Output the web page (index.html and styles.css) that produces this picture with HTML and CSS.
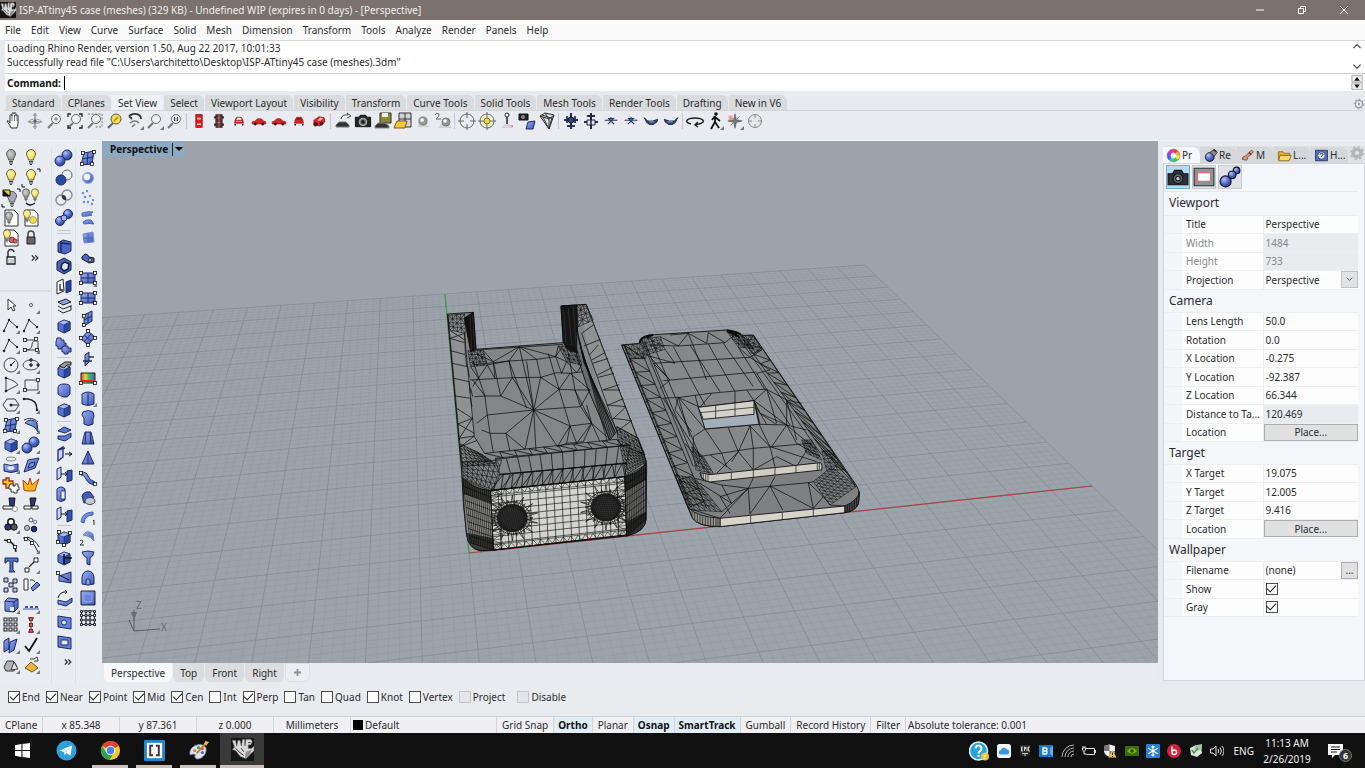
FILE: index.html
```html
<!DOCTYPE html>
<html lang="en">
<head>
<meta charset="utf-8">
<title>ISP-ATtiny45 case (meshes) - Perspective</title>
<link rel="stylesheet" href="styles.css">
</head>
<body>
<svg class="defs" width="0" height="0" aria-hidden="true">
  <defs>
    <radialGradient id="gb" cx=".35" cy=".3" r=".8"><stop offset="0" stop-color="#b4c4f6"/><stop offset=".5" stop-color="#5370cc"/><stop offset="1" stop-color="#1d2f7c"/></radialGradient>
    <linearGradient id="gs" x1="0" y1="0" x2="1" y2="1"><stop offset="0" stop-color="#9db1f2"/><stop offset="1" stop-color="#3c56b8"/></linearGradient>
    <radialGradient id="gy" cx=".4" cy=".4" r=".7"><stop offset="0" stop-color="#fffbb0"/><stop offset="1" stop-color="#f0d23c"/></radialGradient>
    <radialGradient id="gg" cx=".4" cy=".4" r=".7"><stop offset="0" stop-color="#cfd2d6"/><stop offset="1" stop-color="#85898f"/></radialGradient>
    <linearGradient id="rb" x1="0" x2="1"><stop offset="0" stop-color="#e33"/><stop offset=".3" stop-color="#dd4"/><stop offset=".6" stop-color="#3b5"/><stop offset="1" stop-color="#46c"/></linearGradient>
  </defs>
</svg>

<div class="window">
  <header class="titlebar">
    <span class="app-icon" data-icon="rhino"></span>
    <h1 class="title">ISP-ATtiny45 case (meshes) (329 KB) - Undefined WIP (expires in 0 days) - [Perspective]</h1>
    <div class="window-buttons">
      <button aria-label="Minimize"><svg viewBox="0 0 10 10"><path d="M1 5h8"/></svg></button>
      <button aria-label="Restore"><svg viewBox="0 0 10 10"><path d="M1.500 3.500h5v5h-5zM3.500 3.500v-2h5v5h-2"/></svg></button>
      <button aria-label="Close"><svg viewBox="0 0 10 10"><path d="M1 1l8 8M9 1l-8 8"/></svg></button>
    </div>
  </header>

  <nav class="menubar" aria-label="Main menu">
    <button>File</button><button>Edit</button><button>View</button><button>Curve</button><button>Surface</button><button>Solid</button><button>Mesh</button><button>Dimension</button><button>Transform</button><button>Tools</button><button>Analyze</button><button>Render</button><button>Panels</button><button>Help</button>
  </nav>

  <section class="console">
    <div class="history">
      <div class="history-text">
        <p>Loading Rhino Render, version 1.50, Aug 22 2017, 10:01:33</p>
        <p>Successfully read file "C:\Users\architetto\Desktop\ISP-ATtiny45 case (meshes).3dm"</p>
      </div>
      <div class="scroller">
        <svg viewBox="0 0 10 8"><path d="M2 5l3-3 3 3" fill="none" stroke="#444"/></svg>
        <svg viewBox="0 0 10 8"><path d="M2 2l3 3 3-3" fill="none" stroke="#444"/></svg>
      </div>
    </div>
    <div class="command">
      <label for="cmd">Command:</label><input id="cmd" type="text">
      <svg class="spin" viewBox="0 0 12 16"><path d="M.5.500h11v7H.500zM.5 8.500h11v7H.500z" fill="#eee" stroke="#aaa"/><path d="M3 6l3-4 3 4zM3 10l3 4 3-4z" fill="#111"/></svg>
    </div>
  </section>

  <nav class="tabs" aria-label="Toolbar groups">
    <button>Standard</button><button>CPlanes</button><button class="on">Set View</button><button>Select</button><button>Viewport Layout</button><button>Visibility</button><button>Transform</button><button>Curve Tools</button><button>Solid Tools</button><button>Mesh Tools</button><button>Render Tools</button><button>Drafting</button><button>New in V6</button>
    <span class="gear" data-icon="gear"></span>
  </nav>
  <div class="toolbar" data-icons="hand orbit mag magext magwin magsel undoview* magdot* mag11 | cartop carbot carfront carside carside2 carback carpersp | carrot camera savecar openview ball twoball | target targety zaxis camobj frustum | planetop planebot planefront planefront planeside planeside2 | turn walk* compass* target2"></div>

  <main class="work">
    <aside class="palettes">
      <div class="stack">
        <div class="palette two" data-icons="bulboff bulb bulb bulbcorner bulbhalf bulbswap docbulboff docbulb docred lock unlock more"></div>
        <div class="palette two lower" data-icons="cursor point* polyline* polyline* polyline* ctrlcurve* circle* ellipse* arc* rect* hexagon* fillet* srfpts* srfcurve* box* spheres* cylproj* sheet* puzzle explode trim split group* ungroup blend offset* text scale* copies rotate boxfill* array* grid* redarr* slabs* check* solids* pyramid*"></div>
      </div>
      <div class="palette one" data-icons="spheres spherediff sphereint spheresplit | slab nut shell layers box puzzleb | boxtop boxround box | twist extr extr2 cylcut extr2 | boxpts boxarrow wedge rotface | holep holeq more"></div>
      <div class="palette one last" data-icons="srfpts ballw dots flow patch rail rect4* rect4 srfup srfdia cut rainbow cyl* cyl2 trapez cone pipe blob one twoc funnel arch frame netgrid"></div>
    </aside>

    <section class="view">
      <div class="canvas">
        <svg id="scene" viewBox="102 141 1056 522" preserveAspectRatio="xMidYMid slice" role="img" aria-label="Perspective view"></svg>
        <div class="view-title"><span>Perspective</span><button aria-label="View menu"><svg viewBox="0 0 8 6"><path d="M0 1h8l-4 4z"/></svg></button></div>
      </div>
      <nav class="view-tabs" aria-label="Views"><button class="on">Perspective</button><button>Top</button><button>Front</button><button>Right</button><button class="add" aria-label="Add view"><svg viewBox="0 0 10 10"><path d="M5 1v8M1 5h8" stroke="#8d9196" stroke-width="2"/></svg></button></nav>
    </section>

    <aside class="props">
      <nav class="prop-tabs">
        <button class="on"><span data-icon="wheel"></span>Pr</button><button><span data-icon="rendball"></span>Re</button><button><span data-icon="brush"></span>M</button><button><span data-icon="folder"></span>L...</button><button><span data-icon="help"></span>H...</button>
        <span class="gear" data-icon="gear2"></span>
      </nav>
      <div class="prop-body">
        <div class="modes"><button class="on" aria-label="Viewport" data-icon="bigcam"></button><button aria-label="Frame" data-icon="bigframe"></button><button aria-label="Objects" data-icon="bigballs"></button></div>
        <table class="grid">
          <colgroup><col class="col-indent"><col class="col-name"><col></colgroup>
          <tbody>
            <tr><th colspan="3">Viewport</th></tr>
            <tr><td></td><td><label for="p1">Title</label></td><td><input id="p1" value="Perspective"></td></tr>
            <tr class="off"><td></td><td><label for="p2">Width</label></td><td><input id="p2" value="1484" disabled></td></tr>
            <tr class="off"><td></td><td><label for="p3">Height</label></td><td><input id="p3" value="733" disabled></td></tr>
            <tr><td></td><td><label for="p4">Projection</label></td><td><div class="pick"><select id="p4"><option>Perspective</option></select><svg viewBox="0 0 10 8"><path d="M2 2l3 3 3-3" fill="none" stroke="#555"/></svg></div></td></tr>
          </tbody>
          <tbody>
            <tr><th colspan="3">Camera</th></tr>
            <tr><td></td><td><label for="c1">Lens Length</label></td><td><input id="c1" value="50.0"></td></tr>
            <tr><td></td><td><label for="c2">Rotation</label></td><td><input id="c2" value="0.0"></td></tr>
            <tr><td></td><td><label for="c3">X Location</label></td><td><input id="c3" value="-0.275"></td></tr>
            <tr><td></td><td><label for="c4">Y Location</label></td><td><input id="c4" value="-92.387"></td></tr>
            <tr><td></td><td><label for="c5">Z Location</label></td><td><input id="c5" value="66.344"></td></tr>
            <tr class="ro"><td></td><td><label for="c6">Distance to Ta...</label></td><td><input id="c6" value="120.469" readonly></td></tr>
            <tr><td></td><td><label for="c7">Location</label></td><td><button id="c7" class="place">Place...</button></td></tr>
          </tbody>
          <tbody>
            <tr><th colspan="3">Target</th></tr>
            <tr><td></td><td><label for="t1">X Target</label></td><td><input id="t1" value="19.075"></td></tr>
            <tr><td></td><td><label for="t2">Y Target</label></td><td><input id="t2" value="12.005"></td></tr>
            <tr><td></td><td><label for="t3">Z Target</label></td><td><input id="t3" value="9.416"></td></tr>
            <tr><td></td><td><label for="t4">Location</label></td><td><button id="t4" class="place">Place...</button></td></tr>
          </tbody>
          <tbody>
            <tr><th colspan="3">Wallpaper</th></tr>
            <tr><td></td><td><label for="w1">Filename</label></td><td><div class="pick"><input id="w1" value="(none)"><button>...</button></div></td></tr>
            <tr><td></td><td><label for="w2">Show</label></td><td><input id="w2" type="checkbox" checked></td></tr>
            <tr><td></td><td><label for="w3">Gray</label></td><td><input id="w3" type="checkbox" checked></td></tr>
          </tbody>
        </table>
      </div>
    </aside>
  </main>

  <form class="osnap">
    <label><input type="checkbox" checked>End</label><label><input type="checkbox" checked>Near</label><label><input type="checkbox" checked>Point</label><label><input type="checkbox" checked>Mid</label><label><input type="checkbox" checked>Cen</label><label><input type="checkbox">Int</label><label><input type="checkbox" checked>Perp</label><label><input type="checkbox">Tan</label><label><input type="checkbox">Quad</label><label><input type="checkbox">Knot</label><label><input type="checkbox">Vertex</label><label class="dim"><input type="checkbox">Project</label><label class="dim"><input type="checkbox">Disable</label>
  </form>

  <footer class="status">
    <span class="s-plane">CPlane</span><span class="s-num">x 85.348</span><span class="s-num">y 87.361</span><span class="s-num">z 0.000</span><span class="s-num">Millimeters</span><span class="s-layer"><i></i>Default</span><button>Grid Snap</button><button class="on">Ortho</button><button>Planar</button><button class="on">Osnap</button><button class="on">SmartTrack</button><button>Gumball</button><button>Record History</button><button>Filter</button><span class="s-tol">Absolute tolerance: 0.001</span>
  </footer>
</div>

<div class="taskbar">
  <button aria-label="Start"><svg viewBox="0 0 14 14"><path d="M0 2l6-1v5.500H0zM7 .9L14 0v6.500H7zM0 7.500h6V13l-6-1zM7 7.500h7V14l-7-1z" fill="#fff"/></svg></button>
  <button aria-label="Telegram"><svg viewBox="0 0 22 22"><circle cx="11" cy="11" r="10.500" fill="#2d9fdb"/><path d="M4 11L17 5.500 15 16.500l-4-3-2 2.500-.5-3.500z" fill="#fff"/><path d="M8.500 12.500L15 7.500 10 13z" fill="#a9cfe8"/></svg></button>
  <button class="run" aria-label="Chrome"><svg viewBox="0 0 22 22"><circle cx="11" cy="11" r="10" fill="#f7ca28"/><path d="M11 11L2.300 6A10 10 0 0 1 19.700 6z" fill="#dc4436"/><path d="M11 1a10 10 0 0 1 8.700 5H11z" fill="#dc4436"/><path d="M2.300 6A10 10 0 0 0 10 21l4.500-8L6.500 13z" fill="#34a050"/><circle cx="11" cy="11" r="5" fill="#f4f4f4"/><circle cx="11" cy="11" r="3.900" fill="#4a83ec"/></svg></button>
  <button class="run" aria-label="Brackets"><svg viewBox="0 0 22 22"><rect width="22" height="22" rx="1" fill="#2386cd"/><rect x="3" y="3" width="16" height="16" fill="#fff"/><path d="M9.500 6H6.500v10h3M12.500 6h3v10h-3" fill="none" stroke="#333" stroke-width="2"/></svg></button>
  <button class="run" aria-label="Paint"><svg viewBox="0 0 22 22"><path d="M2 14C2 8 8 4 14 5c5 1 6 5 4 9-2 5-8 7-10 5s1-3-1-4-5 2-5-1z" fill="#dde6f0" stroke="#8899ac"/><circle cx="7" cy="11" r="1.600" fill="#e07a2a"/><circle cx="11" cy="8" r="1.600" fill="#3a9f4a"/><circle cx="15" cy="9" r="1.600" fill="#d33"/><circle cx="15" cy="13" r="1.600" fill="#36c"/><path d="M9 14L19 3" stroke="#c77a2c" stroke-width="2"/><path d="M18 1l4 1-3 4-2-2z" fill="#ecc24c"/></svg></button>
  <button class="run active" aria-label="Rhino WIP" data-icon="rhinobig"></button>
  <div class="tray">
    <svg class="wide" viewBox="0 0 20 20"><circle cx="9.500" cy="10" r="9" fill="#2aa3dc" stroke="#eaf6fc" stroke-width="1.500"/><path d="M6.500 7.500a3 3 0 1 1 4.500 2.600c-1 .6-1.500 1-1.500 2.400M9.500 14v1.800" fill="none" stroke="#fff" stroke-width="2"/><circle cx="16" cy="15.500" r="4" fill="#eec33a"/><path d="M16 13.500v2.500M16 17v1" stroke="#fff"/></svg>
    <svg viewBox="0 0 14 14"><rect width="14" height="14" rx="2.500" fill="#eef5fb"/><path d="M3.500 10.500a2.300 2.300 0 0 1 .3-4.500 3.200 3.200 0 0 1 6-.4 2.500 2.500 0 0 1 .7 4.900z" fill="#3b95e6"/></svg>
    <svg viewBox="0 0 14 14"><path d="M2 1h10v10l-5 2-5-2z" fill="#2c2c2c"/><path d="M3.500 3v4M3.500 3h1.500M3.500 5h1.500M3.500 7h1.500M6.500 7V3h1v2h-1M9 3v4M12 3h-1.500v4H12M4 9.500h6M6 11h2" stroke="#ddd" stroke-width=".9" fill="none"/></svg>
    <svg viewBox="0 0 14 14"><path d="M0 1h14v12H0z" fill="#1878c4"/><path d="M11 4l3-2v10l-3-2z" fill="#5ab0ea"/><path d="M4 4v6h3a1.600 1.600 0 0 0 0-3 1.600 1.600 0 0 0 0-3zM4 7h3" fill="none" stroke="#fff" stroke-width="1.400"/></svg>
    <svg viewBox="0 0 14 14" fill="none" stroke="#b9b9b9"><path d="M1 13A12 12 0 0 1 13 1M4 13a9 9 0 0 1 9-9M7 13a6 6 0 0 1 6-6M10 13a3 3 0 0 1 3-3"/></svg>
    <svg viewBox="0 0 14 14" fill="none" stroke="#e4e4e4"><path d="M3.500 4.500h9v6h-8M13.500 6v3M1 2v2M3 2v2M.5 4h3v2l-1.500 1.500L.5 6zM2 7v3h2.500"/></svg>
    <svg viewBox="0 0 14 14"><path d="M6.500.5L12 2v5c0 3-3 5-5.500 6C4 12 1 10 1 7V2z" fill="#f3f3f3"/><path d="M6.500.500V7H1V2zM6.500 7H12c0 3-3 5-5.500 6z" fill="#777"/><path d="M9.500 6l4 7.500H5.500z" fill="#f5c32c"/><path d="M9.500 8.500v2.500M9.500 12v1" stroke="#222"/></svg>
    <svg viewBox="0 0 14 14"><rect y="2" width="14" height="10" fill="#3b6b14"/><path d="M2 7q5-6 10 0-5 5-10 0z" fill="#76b900"/><circle cx="7" cy="7" r="1.800" fill="#2c4a12"/></svg>
    <svg viewBox="0 0 14 14"><rect width="14" height="14" rx="1" fill="#2b7fd4"/><path d="M7 1.500v11M2.200 4.200l9.600 5.600M11.800 4.200L2.200 9.800M5.500 2.500L7 4l1.500-1.500M5.500 11.500L7 10l1.500 1.500" stroke="#fff" fill="none" stroke-width="1.100"/></svg>
    <svg viewBox="0 0 14 14"><circle cx="7" cy="7" r="7" fill="#d81e3c"/><path d="M5 2.500v6" stroke="#fff" stroke-width="1.500"/><circle cx="7.300" cy="8.300" r="2.300" fill="none" stroke="#fff" stroke-width="1.500"/></svg>
    <svg viewBox="0 0 14 14"><path d="M1 4l6-3 5 2 1 6-5 4-6-2z" fill="#dde4de"/><path d="M8 1l5-1v5l-5 2-3-3z" fill="#a9bfac"/><path d="M3 6l2 3 4-5" stroke="#38a04a" stroke-width="1.500" fill="none"/></svg>
    <svg viewBox="0 0 14 14" fill="none" stroke="#e4e4e4"><path d="M.5 5h2.500l3-3v10L3 9H.500zM8 5q1.500 2 0 4M10 3.500q3 3.500 0 7M12 2q4 5 0 10"/></svg>
    <span class="lang">ENG</span>
    <div class="clock"><span>11:13 AM</span><span>2/26/2019</span></div>
    <button class="notes" aria-label="Notifications"><svg viewBox="0 0 16 16"><path d="M0 1h15v11H7l-3 3v-3H0z" fill="#fff"/><path d="M3 4h9M3 6.500h9M3 9h6" stroke="#111"/></svg><b>6</b></button>
  </div>
</div>
<script src="app.js"></script>
</body>
</html>
```

FILE: styles.css
```css
* { box-sizing: border-box; }
body {
  margin: 0;
  min-height: 100vh;
  display: flex;
  flex-direction: column;
  background: #e7eaee;
  color: #2b2b2e;
  font: 10px/14px "Noto Sans", "Open Sans", sans-serif;
}
button, input, select { font: inherit; color: inherit; }
button { background: none; border: 0; padding: 0; margin: 0; white-space: nowrap; }
p, h1 { margin: 0; font: inherit; }
.defs { position: absolute; }
svg { display: block; }

.window { flex: 1; display: flex; flex-direction: column; min-height: 0; }

.titlebar { height: 20px; display: flex; align-items: center; gap: 3px; background: #7b7270; color: #f1eeed; }
.app-icon { width: 16px; height: 16px; }
.titlebar .title { flex: 1; }
.window-buttons { display: flex; }
.window-buttons button { width: 42px; height: 20px; display: flex; align-items: center; justify-content: center; }
.window-buttons svg { width: 10px; height: 10px; fill: none; stroke: #fff; }

.menubar { height: 20px; display: flex; align-items: center; gap: 10px; padding: 0 5px; background: #fbfbfc; }

.console { margin-left: 5px; background: #fff; }
.history { display: flex; justify-content: space-between; border-top: 1px solid #d5d8dc; height: 33px; padding: 0 2px; }
.scroller { display: flex; flex-direction: column; justify-content: space-between; }
.scroller svg { width: 12px; height: 12px; }
.command { display: flex; align-items: center; height: 18px; padding: 0 2px; border-top: 1px solid #c9ccd0; }
.command label { font-weight: 700; color: #111; }
.command input { flex: 1; height: 14px; margin-left: 3px; padding: 0; border: 0; border-left: 1px solid #000; background: none; outline: 0; }
.spin { width: 12px; height: 15px; }

.tabs { height: 20px; margin-left: 5px; padding-left: 1px; display: flex; align-items: flex-end; gap: 1px; border-bottom: 1px solid #d3d5d8; background: #e7eaee; }
.tabs button { height: 15px; padding: 0 6px; background: #dadbdc; border-radius: 2px 6px 0 0; }
.tabs .on { background: #eff1f4; }
.gear { width: 12px; height: 12px; margin-left: auto; }
.toolbar { height: 30px; display: flex; align-items: flex-start; padding: 0 5px; background: #e9ebf0; border-bottom: 1px solid #f4f5f7; }
.toolbar button, .palette button { width: 20px; height: 20px; }
.toolbar .sep { width: 1px; height: 16px; margin: 2px 2px 2px 1px; background: #c5c8ce; }
.icon { width: 100%; height: 100%; }

.work { flex: 1; display: flex; min-height: 0; }
.palettes { display: flex; width: 102px; padding-top: 7px; background: #e9ecf0; }
.stack { width: 51px; }
.two { display: grid; grid-template-columns: 20px 20px; padding-left: 1px; }
.lower { margin-top: 22px; padding-top: 3px; border-top: 2px solid #dadde2; }
.one { display: flex; flex-direction: column; align-items: center; width: 24px; border-left: 1px solid #dcdfe4; }
.one .sep { width: 14px; height: 1px; margin: 1px 0 2px; background: #c3c6cc; }
.one .sep:nth-child(5) { height: 4px; margin: 2px 0; border: solid #c3c6cc; border-width: 1px 0; background: none; }

.view { flex: 1; min-width: 0; display: flex; flex-direction: column; }
.canvas { flex: 1; min-height: 0; position: relative; overflow: hidden; background: #9ca3ab; }
#scene { position: absolute; width: 100%; height: 100%; }
.view-title { position: absolute; left: 1px; top: 0; height: 16px; display: flex; align-items: center; padding-left: 7px; background: #8ca9c2; color: #111; font-weight: 700; }
.view-title button { width: 12px; height: 13px; margin-left: 4px; border-left: 1px solid #222; padding-left: 2px; }
.view-title svg { width: 8px; height: 6px; }
.view-tabs { height: 21px; display: flex; align-items: flex-start; padding-left: 2px; background: #e9ebf0; }
.view-tabs button { height: 19px; padding: 0 7px; background: #dcdddf; border-radius: 0 0 6px 6px; margin-right: 1px; }
.view-tabs .on { background: #f7f8fa; }
.view-tabs .add { background: #eceef1; border: 1px solid #dcdfe3; }
.view-tabs svg { width: 9px; height: 9px; }

.props { width: 207px; padding: 5px 0 3px 5px; display: flex; flex-direction: column; background: #e7eaee; }
.prop-tabs { display: flex; align-items: flex-end; height: 17px; background: #dfe1e4; }
.prop-tabs button { display: flex; align-items: center; gap: 1px; height: 16px; width: 37px; padding-left: 3px; background: #d5d7da; border-radius: 0 8px 0 0; }
.prop-tabs .on { background: #f6f7fa; }
.prop-tabs button span { width: 15px; height: 15px; }
.prop-tabs .gear { width: 14px; height: 14px; margin: 0 1px auto auto; }
.prop-body { flex: 1; background: #f5f6fa; border: 1px solid #d2d5da; padding-right: 6px; }
.modes { display: flex; gap: 2px; padding: 1px 2px 2px; height: 28px; border-bottom: 1px solid #e6e8ec; }
.modes button { width: 24px; height: 24px; background: #dfe1e6; border: 1px solid #c8cad0; }
.modes .on { background: #b6dbf2; border-color: #6fb0d8; }
.grid { width: 100%; border-collapse: collapse; table-layout: fixed; }
.col-indent { width: 18px; }
.col-name { width: 81px; }
.grid td, .grid th { padding: 0; height: 18px; border-bottom: 1px solid #eceef2; line-height: 14px; }
.grid tr:nth-child(odd) td { height: 19px; }
.grid th { height: 23px; text-align: left; font-weight: 400; font-size: 12px; padding-left: 5px; }
.grid td { background: #fdfdfe; }
.grid td:nth-child(1) { background: #f4f5f9; }
.grid td:nth-child(2) { padding-left: 4px; white-space: nowrap; border-right: 1px solid #eceef2; }
.grid input:not([type]) { display: block; width: 100%; height: 17px; padding: 0 0 0 2px; border: 0; background: none; }
.grid .off, .grid .off input { color: #85878b; }
.grid .off td:nth-child(3), .grid .ro td:nth-child(3) { background: #e9ebef; }
.place { display: block; width: 100%; height: 17px; border: 1px solid #adadb0; background: #e1e1e2; text-align: center; line-height: 14px; }
.pick { display: flex; height: 17px; }
.pick select { flex: 1; min-width: 0; appearance: none; border: 0; background: none; padding: 0 0 0 2px; }
.pick svg { flex: none; width: 17px; height: 17px; padding: 3px; border: 1px solid #bfc1c5; background: #e1e2e4; }
.pick button { width: 17px; flex: none; border: 1px solid #adadb0; background: #e1e1e2; line-height: 12px; }
input[type=checkbox] { appearance: none; width: 12px; height: 12px; margin: 0; border: 1px solid #4a4a4d; background: #fff; display: flex; align-items: center; justify-content: center; }
input[type=checkbox]:checked::after { content: ""; width: 8px; height: 4px; margin-bottom: 3px; border: solid #222; border-width: 0 0 1px 1px; transform: rotate(-47deg); }
.grid input[type=checkbox] { margin-left: 2px; }

.osnap { height: 32px; display: flex; align-items: center; gap: 6px; padding: 0 8px 6px; background: #e9ebef; }
.osnap label { display: flex; align-items: center; gap: 2px; }
.osnap .dim input { border-color: #c3c5c9; background: #e4e5e8; }
.osnap .dim + .dim { margin-left: 6px; }

.status { height: 17px; display: flex; background: #f0f0f3; border-top: 1px solid #cfd2d6; }
.status > * { border-right: 1px solid #d4d6da; padding: 0 5px; white-space: nowrap; line-height: 16px; }
.status .s-plane { width: 43px; }
.status .s-num { width: 77px; text-align: center; padding: 0; }
.status .s-layer { width: 146px; display: flex; align-items: center; gap: 2px; padding: 0 2px; }
.s-layer i { width: 10px; height: 10px; background: #000; }
.status .on { background: #e0eef8; color: #111; font-weight: 700; padding: 0 4px; }
.status .s-tol { border: 0; padding: 0 2px; }

.taskbar { height: 35px; display: flex; background: #101010; color: #f2f2f2; }
.taskbar > button { width: 44px; display: flex; align-items: center; justify-content: center; }
.taskbar > button svg { width: 21px; height: 21px; }
.taskbar > button:first-child svg { width: 15px; height: 15px; }
.taskbar .run { border: solid #101010; border-width: 3px 4px 0; box-shadow: inset 0 -3px 0 #c9c2bf; }
.taskbar .run svg { margin-bottom: 3px; }
.taskbar .active { border: 0; background: #3a3a3a; }
.taskbar .active svg { width: 23px; height: 23px; }
.tray { margin-left: auto; display: flex; align-items: center; gap: 7px; padding-right: 13px; }
.tray > svg { width: 14px; height: 14px; }
.tray > .wide { width: 20px; height: 20px; }
.tray > svg:nth-child(3n+1) { margin-right: 1px; }
.lang { margin-left: 3px; }
.clock { display: flex; flex-direction: column; align-items: center; width: 52px; line-height: 16px; }
.notes { position: relative; width: 24px; margin-left: 8px; }
.notes svg { width: 16px; height: 16px; }
.notes b { position: absolute; right: 0; top: 6px; width: 13px; height: 13px; border-radius: 50%; background: #333; border: 1px solid #777; color: #fff; font-size: 9px; line-height: 11px; text-align: center; }
```

FILE: app.js
```js
// ---- small drawing helpers -------------------------------------------------
const p = (d, f = 'none', s = '#222', w = 1) => `<path d="${d}" fill="${f}" stroke="${s}" stroke-width="${w}"/>`;
const c = (x, y, r, f = 'none', s = '#222', w = 1) => `<circle cx="${x}" cy="${y}" r="${r}" fill="${f}" stroke="${s}" stroke-width="${w}"/>`;
const B = 'url(#gb)', S = 'url(#gs)', Y = 'url(#gy)', G = 'url(#gg)', N = '#1d2b66', X = 'none';
const dots = (pts, f = '#fff') => pts.map(([x, y]) => `<rect x="${x - 1.5}" y="${y - 1.5}" width="3" height="3" fill="${f}" stroke="#111" stroke-width=".8"/>`).join('');
const small = (k, s) => `<g transform="translate(10 10) scale(${k}) translate(-10 -10)">${s}</g>`;
const bulb = (f, x = 10, y = 8, k = 1) => `<g transform="translate(${x} ${y}) scale(${k})">` + p('M-4.500-2a4.500 4.500 0 0 1 9 0c0 2.500-2 3-2 6h-5c0-3-2-3.500-2-6z', f, '#5b5a45') + p('M-2 5.500h4M-2 7h4M-1 8.500h2', X, '#444') + '</g>';
const cube = (x = 0, y = 0) => `<g transform="translate(${x} ${y})">` + p('M4 7l6-3 6 2v8l-6 3-6-3z', '#5572d0', N) + p('M4 7l6-3 6 2-6 3z', '#a9bbf5', N, .6) + p('M10 9v8l6-3V6z', '#2f489f', N, .6) + '</g>';
const car = (d) => p(d, '#d22', '#7c1414', .8);
const mag = (extra = '') => p('M8 12l-5 5', X, '#777', 2) + c(11, 8, 4.5, '#eef2f4', '#666') + extra;
const cross = (s) => c(10, 10, 7, X, s) + p('M10 1v6M10 13v6M1 10h6M13 10h6', X, s);
const doc = p('M4 2h9l4 4v12H4z', '#fff', '#333');
const rhino = p('M0 0h20v20H0z', '#151515', X) + p('M1 2l3 0 1 5 1-5h2l1 5 1-6h2v6l1-6h4q3 2 0 5l-2 0v3l3 0 2-2v4l-4 4-3 3-5-2-4-5-3-1 2-2z', '#d8d8d8', '#555', .5) + p('M13 12l5-2-2 5-4 3z', '#8f8f8f', X) + p('M4 9l4 4 3 2M9 9l2 3M15 4h2', X, '#222', .8);

const art = {
  rhino, rhinobig: rhino,
  gear: c(10, 10, 6, X, '#999', 2) + c(10, 10, 8, X, '#999', 1.5).replace('/>', ' stroke-dasharray="3 3"/>') + c(10, 10, 2, '#999', X),
  gear2: c(10, 10, 5.5, X, '#b3b5b9', 5) + c(10, 10, 9, X, '#b3b5b9', 2).replace('/>', ' stroke-dasharray="3.500 3.500"/>'),
  hand: p('M6 17c-1-3-3-5-4-7 1-1 2 0 3 2V5c0-2 2-2 2 0V3c0-2 2-2 2 0 0-2 2-2 2 0v2c1-2 2-1 2 0v7c0 3-1 3-1 5z', '#fff', '#333') + p('M7 5v5M9.500 4v6M12 5v5', X, '#555', .8),
  orbit: small(.9, p('M10 2v16M2 11h16', X, '#666') + p('M10 8a7 2.500 0 1 0 .1 0M10 1l-2 3h4zM10 19l-2-3h4z', X, '#999') + c(10, 10, 1.8, '#556', X)),
  mag: mag(p('M9 8h4M11 6v4', X, '#777')), magdot: mag(), mag11: mag(p('M9.500 6v4M12.500 6v4M11 7v.8M11 9v.8', X, '#333')),
  magext: mag() + p('M3 6V3h3M14 3h3v3M17 14v3h-3M6 17H3v-3', X, '#222', 1.3),
  magwin: mag() + p('M3 3h14v13H9', X, '#777').replace('/>', ' stroke-dasharray="2 1.500"/>'),
  magsel: p('M8 12l-5 5', X, '#666', 2.2) + c(11, 8, 5, '#f4dc4c', '#555') + p('M9 10l4-4', X, '#a98410', 1.5),
  undoview: p('M4 5c5-4 12-2 12 3M4 5l4-2M4 5l3 3', X, '#333', 1.800) + p('M5 12q5-4 9 0M7 16l3-3', X, '#777', 1.500),
  cartop: small(.8, p('M6 2h8v16H6z', '#e01818', '#8a1010') + p('M7.500 6h5v2h-5zM7.500 13h5v2h-5z', '#ffc9c9', X)),
  carbot: small(.8, p('M6 2h8v16H6z', '#68292d', '#333') + p('M5 4v3M15 4v3M5 13v3M15 13v3', X, '#111', 2) + p('M10 2v16M8 6h4M8 12h4', X, '#c99', .8)),
  carfront: small(.75, car('M5 8l2-3h6l2 3 1 5H4z') + p('M7 8l1-2h4l1 2zM6 10.500h8', '#fff', '#eee', .8) + p('M5 14v2M15 14v2', X, '#111', 2)),
  carback: small(.75, car('M5 8l2-3h6l2 3 1 5H4z') + p('M7 6h6v2H7z', '#622', X) + p('M5 14v2M15 14v2', X, '#111', 2)),
  carside: small(.75, car('M1 11l4-1 3-3h5l3 3 3 1v3H1z') + c(5, 14, 1.5, '#111') + c(15, 14, 1.500, '#111')),
  carside2: small(.75, car('M19 11l-4-1-3-3H7l-3 3-3 1v3h18z') + c(5, 14, 1.5, '#111') + c(15, 14, 1.500, '#111')),
  carpersp: small(.85, car('M4 9l6-4 6 1 1 5-6 5-7-2z') + p('M8 9l4-3 3 1-4 3z', '#fbb', X) + c(6, 14, 2, '#511') + c(13, 13, 1.800, '#511')),
  carrot: p('M3 14l3-3h7l3 3v2H3z', '#333', '#777') + p('M8 8q1-5 7-4l-1-2 4 3-4 2', '#fff', '#444'),
  camera: small(.95, p('M2 6h4l1-2h6l1 2h4v10H2z', '#252525', '#111') + c(10, 11, 4, '#777', '#bbb') + c(10, 11, 2, '#222', X)),
  savecar: p('M7 2h11v10H7z', '#8b8a34', '#333') + p('M9 2h6v4H9z', '#eee', X) + p('M2 15l3-3h7l4 3v2H2z', '#333', '#888'),
  openview: p('M6 2h12v14H6z', '#cfd6dc', '#333') + p('M12 2v13M6 8h12', X, '#333') + p('M1 17l3-7h10l-2 7z', '#f3c73c', '#7a5a10'),
  ball: small(.9, p('M3 17l4-5h6l4 5z', '#d2d2d6', X) + c(10, 10, 4.500, '#999', '#777') + c(9, 9, 2, '#fff', X)),
  twoball: p('M5 17l4-5h6l4 5z', '#d2d2d6', X) + c(13, 11, 4, '#999', '#777') + c(12, 10, 1.800, '#fff', X) + p('M2 4q1-3 4-1 1 2-3 5h5', X, '#666'),
  target: cross('#666'), target2: c(10, 10, 6.500, '#e4e6ea', '#888') + p('M10 3v4M10 13v4M3 10h4M13 10h4', X, '#888'),
  targety: c(10, 10, 7, '#fafad2', '#666') + c(10, 10, 3, '#efdc20', '#776') + p('M10 1v6M10 13v6M1 10h6M13 10h6', X, '#667'),
  zaxis: c(10, 4, 2, '#fff', '#222') + p('M10 6v9', X, '#222', 1.5) + p('M10 15h6', X, '#c33') + p('M4 17l4-4h4l4 4z', '#d5d5d9', X),
  camobj: p('M2 3h9v6H2z', '#222', '#111') + c(6, 6, 2, '#888', X) + p('M11 11l7-1-2 8H9z', S, N),
  frustum: p('M3 5l5-3 9 2-5 14z', '#e4e4e6', '#222') + p('M3 5l9 3 5-4M12 8v10M8 2l4 6M6 6l6 12M15 6l-3 12M5 4l9 3', X, '#333'),
  planetop: p('M10 2v16M3 9h14M6 15h8', X, '#26335e', 2.2) + p('M6 5v7M14 5v7', X, '#26335e', 1.800) + c(10, 9, 3, '#33427c', '#111'), planebot: p('M10 2v16M3 11h14M6 5h8', X, '#222f52', 2) + p('M6 9h8v5H6z', '#dde2f2', '#223') + p('M10 2v16', X, '#223', 1.500),
  planefront: small(.8, p('M2 9l6 0 2-3 2 3h6M9 11l-3 3M11 11l3 3M6 7h8', X, '#26335e', 1.4) + c(10, 10, 1.800, '#33427c', X)),
  planeside: small(.85, p('M2 6l4 4h6l6-2-1 3-4 3H8l-3-2z', '#34427a', '#1a2244') + p('M8 11h6', X, '#9ab', 1.200)), planeside2: small(.85, p('M18 6l-4 4H8L2 8l1 3 4 3h5l3-2z', '#34427a', '#1a2244') + p('M6 11h6', X, '#9ab', 1.200)),
  turn: p('M6 13c-8-2-4-6 4-6s12 4 4 6l-3 .5M13 11l-3 3 3 2', X, '#222', 1.500),
  walk: c(11, 3, 1.800, '#111', X) + p('M10 5l-3 4M10 5v6l-4 7M10 11l4 6M10 6l5 4', X, '#111', 1.800),
  compass: small(.9, p('M10 2l1.500 6.500L18 10l-6.500 1.500L10 18l-1.500-6.500L2 10l6.500-1.500z', '#777', '#444', .6) + p('M5 5l3 3M15 5l-3 3M5 15l3-3', X, '#777') + p('M3 4h4v5H3z', '#ee9a9a', X)),
  bulboff: bulb(G), bulb: bulb(Y), bulbcorner: bulb(Y) + p('M16 1h3v3M1 16v3h3', X, '#111'),
  bulbhalf: bulb('#a5a6c4', 11, 10) + p('M2 2h7v6H2z', '#e8e018', '#111') + p('M2 2v6h7z', '#111', X) + p('M16 1h3v3M1 16v3h3', X, '#111'),
  bulbswap: bulb(G, 5, 6, .8) + bulb(Y, 14, 6, .8) + p('M5 15q4 4 9 0', X, '#111', 1.200),
  docbulboff: doc + bulb(G, 8, 9, .8), docbulb: doc + bulb(Y, 6, 7, .8) + c(12, 12, 3.500, '#f4dc36', '#a98'),
  docred: doc + bulb(Y, 6, 7, .8) + c(11, 12, 2.800, '#d66', '#733') + c(14, 13, 2, '#d66', '#733'),
  lock: p('M7 9V6a3 3 0 0 1 6 0v3', X, '#444', 1.500) + p('M6 9h8v7H6z', '#666', '#222'),
  unlock: p('M7 9V5a3 3 0 0 1 6-1', X, '#333', 1.500) + p('M6 9h8v7H6z', '#fff', '#222', 1.300) + p('M6 12h8M6 14h8', X, '#999'),
  more: small(.85, p('M11 7l3 3-3 3M15 7l3 3-3 3', X, '#222', 1.400)),
  cursor: p('M7 4v11l3-3 2 4 2-1-2-4h3z', '#fff', '#333'), point: c(10, 10, 1.500, '#fff', '#555'),
  polyline: p('M3 16L8 5l8 7', X, '#333') + c(3, 16, 1.200, '#222', X) + c(8, 5, 1.200, '#222', X) + c(16, 12, 1.200, '#222', X),
  ctrlcurve: p('M4 5h10M4 15q7 0 7-5t5-4M4 15h13V6', X, '#444') + dots([[4, 5], [15, 4], [4, 15], [16, 15]]),
  circle: c(10, 10, 7, X, '#444') + p('M10 10l4-4', X, '#222') + c(10, 10, 1.200, '#222', X), ellipse: '<ellipse cx="10" cy="10" rx="8" ry="5" fill="none" stroke="#555"/>' + c(10, 5, 1.300, '#555') + c(10, 10, 1.300, '#555') + c(17, 10, 1.200, '#555'),
  arc: p('M5 3q10 3 12 7L5 16z', X, '#444') + c(5, 3, 1.300, '#222', X) + c(5, 16, 1.300, '#222', X), rect: p('M4 5h13v10H4z', X, '#444') + dots([[4, 15], [17, 5]]),
  hexagon: p('M6 4h8l4 6-4 6H6l-4-6z', X, '#444') + p('M10 10h7', X, '#222') + c(10, 10, 1.500, '#222', X), fillet: p('M3 4h4q9 1 9 11', X, '#222', 1.500) + c(3, 4, 1.300, '#222', X) + c(16, 15, 1.300, '#222', X),
  srfpts: p('M6 5l10-2-2 13-11 1z', S, N) + p('M10 4l-1 12M4 11l11-2', X, N) + dots([[5, 5], [16, 4], [14, 16], [4, 16]]),
  srfcurve: p('M4 8q6-6 12 0l1 9q-3-6-6-6z', S, N) + p('M3 5q8-4 14 2', X, '#333'),
  box: cube(), spheres: c(13, 7, 5, B, N) + c(6, 13, 5, B, N), spherediff: c(13, 7, 5, '#f2f4f8', '#666') + c(7, 12, 5, '#274ba0', N), sphereint: c(13, 7, 5, X, '#888', 1.300) + c(7, 12, 5, X, '#888', 1.300) + p('M8 7q5 0 4 5-5 0-4-5z', '#335', X), spheresplit: c(14, 6, 4.500, B, N) + c(6, 13, 4.500, B, N) + c(10, 10, 3, '#9fb3f4', N),
  cylproj: '<ellipse cx="10" cy="4" rx="5" ry="2" fill="none" stroke="#888"/>' + p('M3 9q7 3 14 0v7q-7 3-14 0z', S, N) + '<ellipse cx="10" cy="13" rx="3.500" ry="2" fill="#dfe6ff"/>', sheet: p('M7 5l11-2-4 10-11 4z', S, N) + p('M7 13l2-5 5-1-1 4z', '#7d93de', N),
  puzzle: p('M5 3h3v3h4v4H9v3H5V9H2V5h3z', '#ffc530', '#a02c10', 1.300) + p('M9 9h3v2h2V9h3v3h1v3h-2v3h-3v-1h-3v-3H8v-3z', '#fff', '#333'), puzzleb: p('M3 2h4v2h3v3h2v4H8v2H4v-3H2V6z', S, N) + p('M10 10h4v2h3v4h-3v2h-4v-2H8v-4z', S, N),
  explode: p('M2 5l5 5 2-7 2 7 7-6-3 8-1 4H6l-3-1z', '#ffb520', '#bb3a10'),
  trim: p('M8 3h6l-1 8H9z', '#2a3980', '#111') + p('M2 11h10v3H2z', '#fff', '#222') + c(14, 14, 2.500, '#fff', '#999'), split: p('M9 3h6l-2 8h-3z', '#2a3980', '#111') + p('M3 11h7v3H3zM11 11h6v3h-6z', '#fff', '#222'),
  group: c(10, 7, 3.200, '#fff', '#111', 1.500) + c(7, 12, 3.200, '#2a3470', '#111') + c(13, 12, 3.200, '#556', '#111'), ungroup: c(10, 5, 2, '#eee', '#556') + c(6, 13, 2.500, '#bbc', '#445') + c(13, 14, 2.800, '#26307c', '#111') + c(14, 7, 1.800, '#dde', '#778'),
  blend: p('M3 5q11 1 12 12', X, '#222', 1.500) + dots([[8, 6], [14, 12]]), offset: p('M2 3q9 0 15 14M6 2q8 2 12 10', X, '#222') + dots([[5, 4], [11, 8]]),
  text: p('M4 3h13v4h-2l-1-1h-2v9l2 2H8l1-2V6H6L5 8H4z', '#5273d0', N), scale: p('M4 13h4v4H4zM13 3h4v4h-4z', '#fff', '#222') + p('M8 12l5-5', X, '#222', 1.300),
  copies: [[3, 3], [12, 4], [8, 8], [3, 13], [12, 13]].map(([x, y]) => p(`M${x} ${y}h4v4h-4z`, '#b6c6f2', '#223')).join(''), rotate: p('M3 4h4v11H3z', '#fff', '#333') + p('M10 13l6-6 3 3-7 6z', S, N) + p('M9 5q4-1 5 2', X, '#333'),
  boxfill: p('M4 6l3-3 10 1v9l-4 4-9-1z', S, N) + p('M4 6l9 1 4-3M13 7v10', X, N) + p('M9 12h4v4H9z', '#e6ebff', X), array: p('M2 14h16', X, '#3852a8') + p('M4 12h3M9 12h3M14 12h3', X, '#3852a8', 2),
  grid: [3, 8, 13].flatMap(x => [3, 8, 13].map(y => p(`M${x} ${y}h3v3h-3z`, '#fff', '#223', 1.100))).join(''), redarr: dots([[10, 4], [10, 10], [10, 16]], '#fbb') + p('M7 3h6M7 17h6M10 4v12', X, '#a33', 1.300),
  slabs: p('M3 6l5-3v11l-5 3z', S, N) + p('M9 7l7-3-3 11-5 3z', S, N), check: p('M4 11l4 5 8-13', X, '#111', 1.800), solids: p('M3 12l3-6h6l4 5-3 5H5z', '#b3b4b8', '#333') + p('M10 15l3-8 4 7z', '#e2e2e5', '#444'), pyramid: p('M4 13l6-6 7 6-6 4z', '#e9b340', '#7a5010') + p('M9 4h4l3-2 1 4h-4', '#fff', '#333'),
  slab: p('M4 7l5-3 8 2v9l-6 3-7-2z', '#4a68c4', N) + p('M7 5v12M7 7l9 1', X, '#16235c', 1.300), nut: p('M10 2l7 4v8l-7 4-7-4V6z', '#4a64b8', '#131c44') + p('M11 6l4 2-1 5-4 2-3-3 1-4z', '#e2e6f6', '#131c44', 1.500), shell: p('M3 6l6-3 1 12-7 3z', '#fff', '#222') + p('M12 6l5-2v11l-5 2z', '#24439c', N) + p('M6 8v6h3', X, '#222', 1.300), layers: p('M4 6l8-3 5 3-8 3z', '#8ba3ea', '#222') + p('M4 10l5 3 8-3M4 14l5 3 8-3V9', X, '#222'),
  boxtop: cube(0, 1) + p('M5 6l6-4h6v3h-4l-3 3z', '#999', '#222'), boxround: p('M4 8q0-4 6-4t6 3v7q-2 4-6 3t-6-3z', S, N), twist: p('M4 7l6-4 7 3-6 3zM4 12v3l7 2 6-4v-4l-6 3z', '#5b79d6', N),
  extr: p('M4 6l5-3v10l-5 4z', '#c5d2fa', N, 1.300) + p('M11 10h7M15 8l3 2-3 2', X, '#111') + p('M4 6l7-2', X, N, 1.500), extr2: p('M3 5l4-2v10l-4 3z', '#c5d2fa', N) + p('M13 7l5-1v10l-5 2z', '#2c55b4', N) + p('M7 10h6M11 8l2 2-2 2', X, '#111'), cylcut: p('M3 5q4-4 8 0v11q-4 3-8 0z', S, N) + p('M7 7h4v8H7z', '#e7edff', N, .8),
  boxpts: cube() + dots([[5, 4], [16, 5], [10, 17], [4, 14]]), boxarrow: cube() + p('M10 10h8M10 6v10', X, '#111', 1.500), wedge: p('M5 8l12-4v11L5 13z', S, N) + p('M3 6l12 6', X, '#111') + dots([[4, 5]]), rotface: p('M4 12l8 2 6-4v4l-6 4-8-2z', S, N) + p('M4 10q2-7 9-6M11 2l2 2-2 2', X, '#111'),
  holep: p('M4 4l13 2v11L4 15z', '#6482da', N) + c(10, 10.500, 2.500, '#dfe6ff', N), holeq: p('M4 4l13 2v11L4 15z', '#6482da', N) + p('M7 8h7v5H7z', '#dfe6ff', N),
  ballw: c(10, 10, 5.500, S, '#8ea3e8') + c(9, 9, 3.200, '#f2f6ff', X), dots: [[5, 5], [9, 3], [7, 9], [12, 8], [15, 12], [10, 14], [6, 14], [14, 16]].map(([x, y]) => c(x, y, 1.200, '#6f8bdc', X)).join(''), flow: p('M4 5q7-2 11-1-5 3-1 3-8 2-10 1z', S, '#4a63b8') + p('M5 14q3-3 8-2l3 4q-5-1-10 0z', S, '#4a63b8'), patch: p('M5 6l10-2 1 10-10 1z', S, '#7a90dd') + p('M10 5v10M5 10h10', X, '#4c64b8'), rail: p('M4 9q4-6 7 0l5 1v4l-5 1-7-4z', '#4a66c0', '#111') + c(12, 12, 1.500, '#fff'),
  rect4: p('M3 5h14v10H3z', S, N) + p('M10 5v10M3 10h14', X, N) + dots([[3, 5], [17, 5], [3, 15], [17, 15]]), srfup: p('M6 7l8-4v10l-8 5z', S, N) + p('M10 5v10M6 12l8-4', X, N) + dots([[6, 17], [6, 8]]), srfdia: p('M10 3l7 6-7 8-7-6z', S, N) + p('M6 7l7 6M13 6l-7 8', X, N) + dots([[10, 3], [17, 10], [10, 17], [3, 10]]), cut: p('M7 7l4-3v10l-4 4z', S, N) + p('M11 9h5M5 13h9', X, '#26335e', 1.300), rainbow: p('M3 5h14v10H3z', 'url(#rb)', '#222') + p('M3 13h14', X, '#e22', 2) + dots([[3, 15], [17, 15]]),
  cyl: p('M4 6q6-4 12 0v10q-6 3-12 0z', S, N) + p('M10 5v12', X, N), cyl2: p('M5 4q6-3 10 0l1 4-1 3 0 5q-5 3-9 0l0-6-2-3z', S, N), trapez: p('M7 4h6l3 12H4z', S, N) + p('M8 4l-1 12M12 4l1 12', X, N), cone: p('M10 3l6 13H4z', S, N) + p('M10 3v13', X, N), pipe: p('M3 4q6 0 7 4t7 6v3q-7-1-9-6T3 7z', S, N) + dots([[3, 5], [17, 16]]),
  blob: p('M4 8q2-5 8-4l4 5-4 5-6 1z', '#435fbb', N) + '<ellipse cx="12" cy="13" rx="5" ry="3.500" fill="#c3cada" stroke="#445"/>', one: p('M3 14q1-10 12-10v3q-8 0-9 8z', S, '#4a63b8') + p('M15 13l1-1v5', X, '#333'), twoc: p('M5 7q4-6 10-1l1 7q-4-5-7-5z', S, '#6a83d6') + p('M2 13q1-2 3 0 0 2-3 4h4', X, '#333'), funnel: p('M4 4q6-2 12 0-1 5-4 6v7l-3-1v-6q-4-2-5-6z', S, N), arch: p('M4 16V9q1-6 6-6t6 6v7l-6 1z', S, N) + p('M8 16v-4q2-3 4 0v4', '#8ba0ea', N), frame: p('M3 3h14v14H3z', S, '#223') + p('M6 6h8v8H6z', '#6b87dc', '#8fa5ee'), netgrid: p('M3 3h14M3 7.500h14M3 12h14M3 16.500h14M3.500 3v14M8 3v14M12 3v14M16.500 3v14', X, '#223') + [2.5, 7, 11, 15.5].flatMap(x => [2.5, 6.5, 11, 15.5].map(y => p(`M${x} ${y}h2v2h-2z`, '#fff', '#223', 1))).join(''),
  wheel: ['#f33', '#fa2', '#ee3', '#3c4', '#2cc', '#36f', '#a3e', '#e3a'].map((k, i) => `<path d="M10 4a6 6 0 0 1 4.700 2" fill="none" stroke="${k}" stroke-width="4.500" transform="rotate(${i * 45} 10 10)"/>`).join('') + c(10, 10, 8.500, X, '#555', .7),
  rendball: c(9, 12, 6, B, '#111') + p('M9 6l6-4 4 4-4 5z', '#888', '#222') + p('M14 2l4 3', X, '#222', 2), brush: p('M3 15q0-4 4-4l8-8 3 2-8 8q1 5-7 2z', '#d89a7c', '#6a3a2a') + p('M12 6l3 3', X, '#533', 2), folder: p('M2 5h6l2 2h7v9H2z', '#e3ad2c', '#7a5c14') + p('M4 10h15l-3 7H2z', '#f8d96c', '#7a5c14'), help: p('M2 3h16v14H2z', '#4a72c8', '#224') + c(10, 10, 5, '#e9f0ff', '#336') + p('M8 9q0-2 2-2t2 2l-2 2v1', X, '#235', 1.300),
  bigcam: p('M1 7h4l2-3h6l2 3h4v10H1z', '#2d3238', '#111') + c(10, 11.500, 4.500, '#5d6a75', '#111') + c(10, 11.500, 2, '#cfdbe4', '#111'), bigframe: p('M1 2h18v16H1z', '#8b9698', '#333') + p('M4 6h12v8H4z', '#fff', '#e56a7a', 1.300), bigballs: c(16, 4, 3, B, '#112') + c(12, 8, 3.500, B, '#112') + c(6, 14, 5, B, '#112')
};
const icon = (name) => {
  const fly = name.endsWith('*');
  return `<svg class="icon" viewBox="0 0 20 20">${art[fly ? name.slice(0, -1) : name] || ''}${fly ? '<path d="M19 15v4h-4z" fill="#777"/>' : ''}</svg>`;
};
document.querySelectorAll('[data-icon]').forEach(el => { el.innerHTML = icon(el.dataset.icon); });
document.querySelectorAll('[data-icons]').forEach(el => {
  el.innerHTML = el.dataset.icons.split(' ').map(n => n === '|' ? '<span class="sep"></span>' : `<button aria-label="${n.replace('*', '')}">${icon(n)}</button>`).join('');
});

// ---- construction plane: 140 x 140 units seen in perspective ---------------
const map = (u, v) => {
  const w = 1 + 0.1013 * u + 0.5381 * v;
  return [(469 + 733.6 * u + 215.4 * v) / w, (553 - 17.8 * u - 100.8 * v) / w].map(n => n.toFixed(1)).join(' ');
};
let minor = '', major = '';
for (let i = -70; i <= 70; i++) {
  const t = i / 70, d = `M${map(t, -1)}L${map(t, 1)}M${map(-1, t)}L${map(1, t)}`;
  if (i % 5) minor += d; else major += d;
}
let out = p(minor, X, '#858d96', .25) + p(major, X, '#7f8790', .7);
out += p('M469 553L1092 486', X, '#a8433f', 1.200) + p('M469 553L445 294', X, '#3f9a4a', 1.200);

// ---- mesh helpers ----------------------------------------------------------
const lerp = (a, b, t) => [a[0] + (b[0] - a[0]) * t, a[1] + (b[1] - a[1]) * t];
const pt = (a) => a[0].toFixed(1) + ' ' + a[1].toFixed(1);
const seg = (...a) => 'M' + a.map(pt).join('L');
const poly = (pts, f) => p('M' + pts + 'z', f, '#0b0b0b', 2.6);
const quad = (q, nu, nv, diag) => {
  const at = (i, j) => lerp(lerp(q[0], q[1], i / nu), lerp(q[3], q[2], i / nu), j / nv);
  let d = '';
  for (let i = 0; i <= nu; i++) d += seg(at(i, 0), at(i, nv));
  for (let j = 0; j <= nv; j++) d += seg(at(0, j), at(nu, j));
  if (diag) for (let i = 0; i < nu; i++) for (let j = 0; j < nv; j++) {
    if (diag === 2 && (i + j) % 2) d += seg(at(i + 1, j), at(i, j + 1)); else d += seg(at(i, j), at(i + 1, j + 1));
  }
  return d;
};
const zig = (a, b, e, f, n) => {
  let d = seg(a, b) + seg(e, f);
  for (let i = 0; i < n; i++) d += seg(lerp(a, b, i / n), lerp(e, f, (i + .5) / n), lerp(a, b, (i + 1) / n));
  return d;
};
const rungs = (a, b, e, f, n) => { let d = seg(a, b) + seg(e, f); for (let i = 0; i <= n; i++) d += seg(lerp(a, b, i / n), lerp(e, f, i / n)); return d; };
const fan = (o, r) => r.map(q => seg(o, q)).join('');
const hole = (x, y) => {
  let d = '';
  for (let i = 0; i < 28; i++) {
    const a = i * Math.PI / 14, b = a + Math.PI / 28, r = i % 2 ? 78 : 62;
    const at = (k, t) => [x + k * Math.cos(t), y + k * .88 * Math.sin(t)];
    d += seg(at(44, a - .1), at(r, a), at(44, a + .1)) + seg(at(54, a), at(54, b), at(54, a + Math.PI / 14));
  }
  let s = p(d, X, '#0b0b0b', 2) + `<ellipse cx="${x}" cy="${y}" rx="46" ry="42" fill="#1b1b1b"/>`;
  let h = '';
  for (let i = -5; i <= 5; i++) h += `M${x + i * 7 - 8} ${y - 34 + Math.abs(i) * 3}l16 ${68 - Math.abs(i) * 6}M${x - 36 + Math.abs(i) * 3} ${y + i * 6}h${72 - Math.abs(i) * 6}`;
  return s + p(h, X, '#444', 1);
};
const K = (d, w = 2.4) => p(d, X, '#0b0b0b', w);

// ---- case body (three drawing units per pixel) -----------------------------
let a = poly('52 72L130 67 138 178 400 158 393 48 468 43 640 490 Q650 510 650 530L648 690Q645 725 590 738L190 780 150 782Q115 775 110 735L100 640 95 540z', '#838586');
a += p('M55 80L104 92 132 430 160 495 95 520zM455 90L470 46 632 470 560 430 510 320z', '#8f9192', X);
a += poly('103 84L130 67 138 178 122 186', '#101010') + poly('393 48L440 45 445 190 412 178 400 158', '#161616');
a += p('M127 72l8 104M120 76l5 108M400 60l8 98M415 55l10 110M430 50l8 112', X, '#4c4c4c', 1.200);
a += poly('440 110L462 215 556 430 540 450 475 300 440 195', '#6a6b6c');
let fine = quad([[54, 76], [104, 72], [106, 130], [60, 120]], 4, 4, 2) + quad([[440, 46], [468, 43], [490, 90], [445, 110]], 3, 4, 2);
let d = 'M58 120L104 150M60 145L104 130 106 192M60 145L104 158M62 182L106 194 110 228M66 220L113 230 118 262M71 265L117 275 121 310M76 318L122 325 126 350M80 355L127 385M84 402L127 385 88 445 133 438 92 470 140 452M84 402L133 430M104 130L108 180 133 440 165 492M54 80L95 520';
d += 'M455 130L490 105M462 168L512 148M478 195L505 165M485 210L525 188M488 220L535 205M502 255L548 232M505 262L552 250M518 300L568 284M520 300L570 300M535 345L580 326M530 345L588 350M548 388L588 350M548 385L605 392M560 425L605 392M560 410L625 445M455 130L562 430M468 43L640 490';
for (let i = 0; i < 7; i++) d += seg([442 + i * 3, 130 + i * 14], [532 + i * 5, 455 - i * 5]);
d += fan([311, 360], [[247, 263], [290, 215], [332, 262], [387, 298], [452, 350], [420, 408], [382, 470], [318, 482], [285, 478], [228, 430], [172, 375], [212, 318], [268, 170]]);
d += 'M133 320L165 318 212 318 247 263 332 262 387 298 435 300 452 350 485 400 420 408 382 470M172 375L180 430 228 430 285 478M130 215L165 320 172 375 140 400M180 430L155 420M180 430L190 487M228 430L240 484M120 270L247 263M247 263L237 213 128 225M332 262L320 208 237 213 268 170 320 208 377 200M387 298L355 190M435 300L415 190M387 298L420 250 380 248 332 262M452 350L480 300 435 300M420 408L410 460 382 470M485 400L470 345M485 400L440 460M410 460L460 455 485 400 530 440M190 215L212 318M237 213L290 355M122 295L128 320M128 270L165 318M480 300L420 250 460 245M140 180L400 163M140 192L190 215 268 170 377 200 400 165M420 408L440 460M387 298L420 408M435 300L485 400 510 455';
fine += quad([[114, 182], [160, 182], [172, 225], [122, 230]], 5, 4, 2) + quad([[385, 168], [440, 175], [455, 225], [410, 215]], 5, 4, 2);
d += 'M122 230L145 265 172 225 195 265 190 215M145 265L128 290M172 225L237 213M160 182L190 215M385 168L377 200 395 250 410 215 440 248 455 225M410 215L377 200';
d += zig([165, 490], [560, 448], [195, 505], [600, 465], 9) + quad([[195, 508], [600, 465], [590, 520], [210, 553]], 12, 1, 0) + quad([[210, 553], [590, 520], [585, 560], [190, 600]], 12, 1, 0) + zig([182, 600], [585, 560], [205, 555], [592, 518], 13);
fine += quad([[92, 462], [150, 490], [195, 520], [98, 530]], 6, 5, 1) + quad([[560, 410], [625, 445], [645, 495], [565, 460]], 6, 5, 2);
fine += quad([[96, 515], [215, 510], [190, 600], [100, 565]], 7, 5, 1) + quad([[570, 465], [642, 490], [648, 515], [588, 555]], 8, 6, 1);
a += K(d, 2.2) + K(fine, 1.700);
a += poly('180 602L585 560 590 735 190 780', '#d3d3cf');
a += K(quad([[180, 602], [585, 560], [590, 735], [190, 780]], 17, 9, 0), 1.900) + K(zig([180, 602], [585, 560], [184, 616], [586, 574], 18) + zig([190, 780], [590, 735], [188, 764], [588, 720], 18) + quad([[180, 602], [215, 598], [215, 777], [190, 780]], 1, 12, 2) + quad([[560, 563], [585, 560], [590, 735], [565, 739]], 1, 12, 2), 1.600);
a += hole(247, 684) + hole(528, 652);
a += poly('98 562Q130 598 182 602L190 780 150 782Q115 775 110 735L103 660z', '#92928f') + K(quad([[99, 568], [182, 602], [190, 780], [120, 758]], 13, 9, 0), 1.900);
a += p('M99 565Q130 598 182 602L184 640 102 612zM110 728L189 745 190 780 150 782Q116 775 110 728z', '#000', X).replace('/>', ' fill-opacity=".6"/>');
a += poly('585 560Q640 545 648 512L648 690Q645 725 590 738', '#777776') + K(quad([[585, 560], [646, 525], [646, 690], [590, 738]], 11, 8, 0), 1.900);
a += p('M585 560Q640 545 648 512L648 570 586 605zM589 695L648 665 648 690Q645 725 590 738z', '#000', X).replace('/>', ' fill-opacity=".6"/>');
out += `<g transform="translate(430 290) scale(.3333)">${a}</g>`;

// ---- lid -------------------------------------------------------------------
let b = poly('35 105L88 100Q88 82 120 75L350 60 385 68 395 76 430 75 735 520Q750 540 748 555L745 580Q738 603 705 608L330 650Q265 650 248 625L235 595z', '#7e8081');
b += p('M120 78L375 64 440 120 640 440 560 470 300 495 245 440 110 130z', '#868889', X);
let e = zig([42, 106], [240, 590], [95, 125], [290, 595], 12) + rungs([35, 105], [235, 595], [44, 106], [244, 590], 20);
e += zig([430, 76], [735, 525], [400, 90], [645, 430], 12) + 'M120 80L270 440M375 68L635 435M95 88L250 470M105 100L262 470';
let f2 = quad([[42, 105], [92, 102], [108, 145], [66, 145]], 4, 3, 2) + quad([[90, 88], [150, 80], [165, 118], [108, 135]], 5, 4, 2) + quad([[350, 64], [395, 72], [430, 115], [385, 112]], 5, 4, 2) + quad([[395, 78], [430, 76], [455, 120], [425, 130]], 3, 4, 2);
e += 'M120 105L205 108 235 70 290 100 295 68 345 98 380 70M150 80L205 108M180 75L235 70M205 108L345 98M235 70L290 210M190 110L285 285M240 105L330 245M295 102L375 245M340 100L430 230M385 112L465 240M130 160L420 142M160 212L440 186M155 265L210 262 300 250 410 240 470 238M180 210L120 140M130 160L180 210 150 235M205 262L270 292 305 250M205 262L285 357M205 262L240 380M205 262L195 300 245 365M160 265L270 440M470 238L432 272 410 240M470 238L440 190M470 238L530 270M470 238L540 345M470 238L500 340M432 272L530 345 530 270M432 272L447 343 530 345 590 360M530 270L560 390M530 270L575 280M420 142L480 180 440 190M375 245L375 280M255 255L265 292M108 135L195 160 165 118M385 112L420 142 455 120';
e += 'M285 357L250 380 250 430M285 357L335 430M355 354L385 425M420 348L430 415 430 480M420 348L385 425M420 348L480 410M285 357L447 343M447 343L480 410M530 345L485 410M530 345L560 400 630 440M530 345L620 420M265 440L430 415 600 400M385 425L365 455M385 425L430 480M480 410L495 470M480 410L620 455M250 430L300 494M300 435L365 480M335 430L350 470M385 425L320 490M430 480L500 440 560 470 590 420';
f2 += quad([[245, 410], [280, 440], [310, 490], [258, 480]], 4, 5, 2) + quad([[575, 390], [605, 390], [635, 450], [590, 430]], 4, 5, 2);
f2 += quad([[195, 495], [255, 505], [335, 605], [240, 600]], 6, 6, 1) + quad([[610, 515], [665, 470], [738, 530], [660, 585]], 7, 6, 1) + quad([[635, 425], [665, 420], [700, 480], [650, 480]], 3, 5, 2);
e += 'M335 525L415 535 595 518M415 535L330 560 360 610M415 535L330 625M415 535L420 612M415 535L365 580M480 528L610 595M480 528L518 600M480 528L420 612M595 518L610 595M480 528L495 500M415 535L430 505M595 518L640 560 610 595M255 505L335 525 365 580 335 605M270 520L365 580M610 515L595 518M640 560L660 585 705 588M225 400L250 430M235 595L330 625';
b += K(e, 2.2) + K(f2, 1.600);
b += K('M90 100Q88 82 120 76M110 84Q115 78 130 74M350 61Q380 64 392 74M355 66Q375 70 388 82', 6);
b += poly('265 292L432 272 447 343 285 357', '#a5adb8') + poly('265 292L432 272 432 313 280 328', '#d3d1c8') + K('M270 308L432 292M317 286V325M375 279V318', 2);
b += K('M432 272L450 310 530 345M436 280L450 343M442 295L470 343M450 310L500 344', 2);
b += poly('300 494L632 458Q638 465 635 480L300 516Q272 512 270 488', '#cfcdc6') + K('M364 488V509M430 481V502M495 474V495M558 467V488M275 490V506M280 492V510M287 493V513M294 494V515M628 459V480M622 460V481', 2);
b += poly('330 625L705 588 705 608 330 650', '#d6d4cd') + K('M422 616V640M517 607V630M610 598V619', 2);
b += poly('236 595Q262 620 330 625L330 650Q265 650 248 625z', '#979794') + K('M246 604V620M254 609V630M262 613V637M270 616V642M278 619V645M286 621V647M294 622V648M302 623V649M310 624V650M318 625V650M324 625V650', 2);
b += poly('705 588Q745 570 748 545L746 580Q738 603 705 608', '#444') + K('M712 586V606M719 583V604M726 579V600M733 573V595M740 566V588', 2);
out += `<g transform="translate(610 310) scale(.3333)">${b}</g>`;

// ---- world axes marker -----------------------------------------------------
out += p('M134 631L160 629M134 631V610M134 631L129 620', X, '#555c64') + p('M131 612h6l-3 8z', '#666c74', X);
out += '<text x="136" y="609" fill="#60676f" font-size="10">Z</text><text x="161" y="631" fill="#60676f" font-size="10">X</text>';
document.getElementById('scene').innerHTML = out;
```
